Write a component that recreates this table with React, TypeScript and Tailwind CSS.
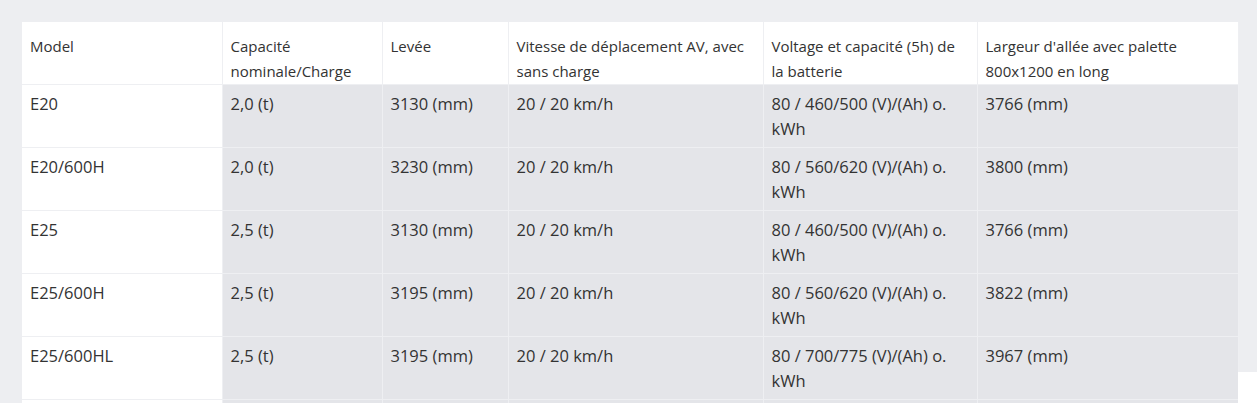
const headers = [
  'Model',
  'Capacité nominale/Charge',
  'Levée',
  'Vitesse de déplacement AV, avec sans charge',
  'Voltage et capacité (5h) de la batterie',
  "Largeur d'allée avec palette 800x1200 en long",
];

const widths = ['w-[200px]', 'w-[160px]', 'w-[126px]', 'w-[255px]', 'w-[214px]', 'w-[261px]'];

const rows = [
  ['E20', '2,0 (t)', '3130 (mm)', '20 / 20 km/h', '80 / 460/500 (V)/(Ah) o. kWh', '3766 (mm)'],
  ['E20/600H', '2,0 (t)', '3230 (mm)', '20 / 20 km/h', '80 / 560/620 (V)/(Ah) o. kWh', '3800 (mm)'],
  ['E25', '2,5 (t)', '3130 (mm)', '20 / 20 km/h', '80 / 460/500 (V)/(Ah) o. kWh', '3766 (mm)'],
  ['E25/600H', '2,5 (t)', '3195 (mm)', '20 / 20 km/h', '80 / 560/620 (V)/(Ah) o. kWh', '3822 (mm)'],
  ['E25/600HL', '2,5 (t)', '3195 (mm)', '20 / 20 km/h', '80 / 700/775 (V)/(Ah) o. kWh', '3967 (mm)'],
  // next row only peeks in at the bottom edge
  ['', '', '', '', '', ''],
];

export default function App() {
  return (
    <div className="relative h-[403px] w-[1257px] overflow-hidden bg-[#edeef1] pl-[22px] pt-[22px] font-['Open_Sans',sans-serif] leading-[25px] text-[#333333]">
      <table className="table-fixed border-collapse">
        <thead>
          <tr className="h-[62px]">
            {headers.map((h, i) => (
              <th
                key={h}
                className={`${widths[i]} border border-t-0 border-[#eeeff2] bg-white px-2 pt-[12px] pb-0 text-left align-top text-[15px] font-normal first:border-l-0`}
              >
                {h}
              </th>
            ))}
          </tr>
        </thead>
        <tbody>
          {rows.map((r, ri) => (
            <tr key={ri} className="h-[63px]">
              {r.map((c, i) => (
                <td
                  key={i}
                  className={`border border-[#eeeff2] px-2 pt-[6px] pb-[6px] align-top text-[16.5px] first:border-l-0 ${i === 0 ? 'bg-white' : 'bg-[#e4e5e9]'}`}
                >
                  {c}
                </td>
              ))}
            </tr>
          ))}
        </tbody>
      </table>
      <div className="absolute right-0 top-[372px] h-[31px] w-[19px] bg-white" />
    </div>
  );
}
